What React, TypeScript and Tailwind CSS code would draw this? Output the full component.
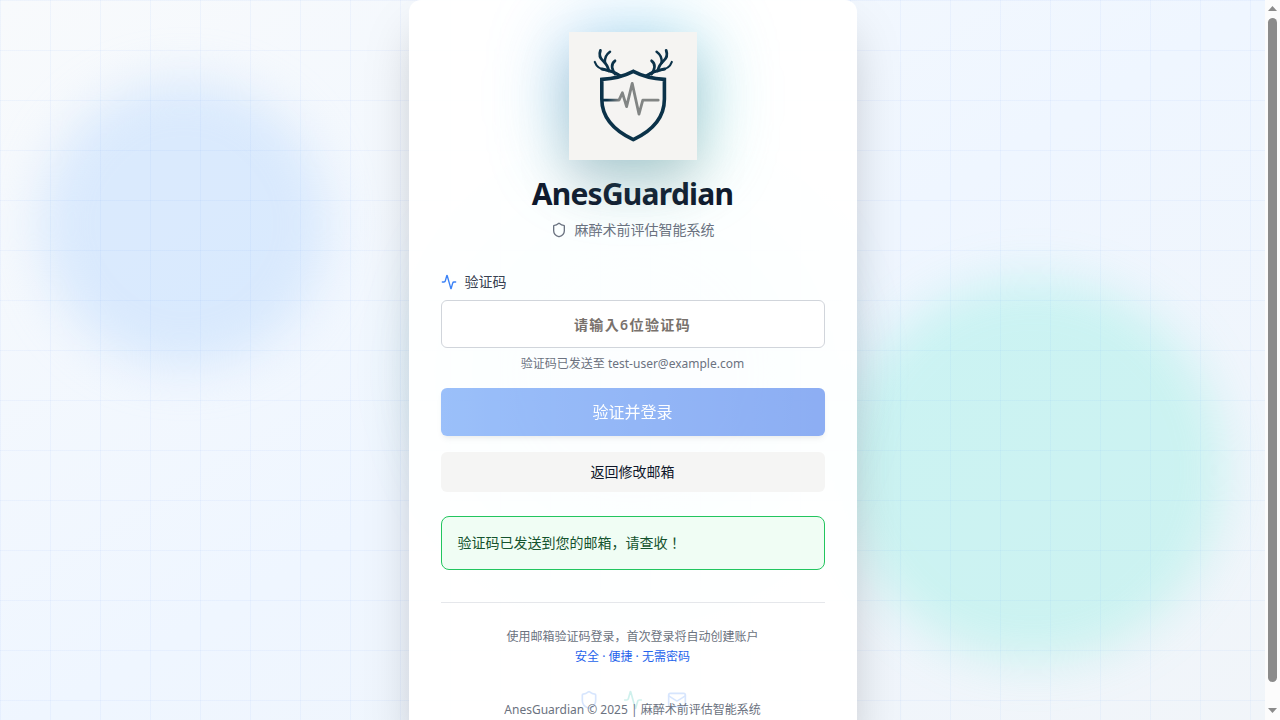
import { Activity, Mail, Shield } from "lucide-react";

function Antler() {
  return (
    <g>
      <path d="M25.8 30C27.4 34.6 31.4 37.4 37 38.2C43 39.2 47 40.6 51.5 44.6" strokeWidth="2.2" />
      <path d="M33 37C40 38.2 45.6 40 51.6 44" strokeWidth="3" />
      <path d="M31.4 18.4C29.8 22.8 31.2 26.4 34.2 29C37.4 31.8 39 34.6 39.8 39" strokeWidth="2.8" />
      <path d="M41 19.8C37 22.6 35.4 26 36 31" strokeWidth="2.5" />
      <path d="M46 28.8C42.4 31.4 42.2 36 46 42" strokeWidth="2.7" />
    </g>
  );
}

function Logo() {
  return (
    <svg
      viewBox="0 0 128 128"
      role="img"
      aria-label="AnesGuardian Logo"
      className="relative size-32 drop-shadow-2xl"
      fill="none"
      strokeLinecap="round"
      strokeLinejoin="round"
    >
      <defs>
        <linearGradient id="pulse" gradientUnits="userSpaceOnUse" x1="38" y1="0" x2="50" y2="0">
          <stop offset="0" stopColor="#0b3249" />
          <stop offset="1" stopColor="#828584" />
        </linearGradient>
      </defs>
      <rect width="128" height="128" fill="#f5f4f2" />
      <g stroke="#0b3249">
        <Antler />
        <g transform="matrix(-1 0 0 1 128.6 0)">
          <Antler />
        </g>
        <path
          d="M64.3 39.4C55.5 44 44.5 46.8 32.8 47.4V67C32.8 86 45 98.6 64.3 107.6C83.6 98.6 95.4 86 95.4 67V47.4C84 46.8 73 44 64.3 39.4Z"
          strokeWidth="3.6"
          strokeLinejoin="miter"
        />
      </g>
      <path
        d="M34 68.2H50L53.4 60.8L57.6 74.6L63.2 51.4L70 82.2L73.8 68.2H89.2"
        stroke="url(#pulse)"
        strokeWidth="2.8"
      />
    </svg>
  );
}

function Backdrop() {
  return (
    <div className="pointer-events-none absolute inset-0 overflow-hidden">
      <div className="absolute top-20 left-10 size-72 rounded-full bg-[#bfdbfe]/50 blur-xl" />
      <div className="absolute right-10 bottom-20 size-96 rounded-full bg-[#5eead4]/25 blur-xl" />
      <div className="absolute top-1/2 left-1/2 size-96 -translate-1/2 rounded-full bg-[#22d3ee]/25 blur-2xl" />
      <div className="absolute inset-0 bg-[linear-gradient(rgba(59,130,246,0.05)_1px,transparent_1px),linear-gradient(90deg,rgba(59,130,246,0.05)_1px,transparent_1px)] bg-[size:50px_50px]" />
    </div>
  );
}

function ScrollRail() {
  return (
    <div
      aria-hidden="true"
      className="sticky top-0 flex h-screen w-[15px] shrink-0 flex-col items-center gap-[7px] bg-[#fcfcfc] pt-[6px] pb-[7px]"
    >
      <svg viewBox="0 0 9 5" className="h-[5px] w-[9px] shrink-0" fill="#8b8b8b">
        <path d="M4.5 0L9 5H0Z" />
      </svg>
      <div className="w-[9px] flex-1 rounded-full bg-[#8b8b8b]" />
      <svg viewBox="0 0 9 5" className="mt-[19px] h-[5px] w-[9px] shrink-0" fill="#8b8b8b">
        <path d="M0 0H9L4.5 5Z" />
      </svg>
    </div>
  );
}

export default function App() {
  return (
    <div className="flex items-start font-['Noto_Sans','Noto_Sans_CJK_JP',sans-serif]">
      <main className="relative flex min-h-screen flex-1 items-center justify-center bg-[linear-gradient(to_bottom_right,#f8fafc,#eff6ff_50%,#f1f5f9)]">
        <Backdrop />

        <section className="relative w-full max-w-md rounded-xl bg-white/95 p-8 shadow-2xl">
          <header className="mb-8 flex flex-col items-center text-center">
            <div className="relative mb-4">
              <div className="absolute inset-0 rounded-3xl bg-linear-to-br from-[#60a5fa] to-[#5eead4] opacity-60 blur-2xl" />
              <Logo />
            </div>
            <h1 className="text-3xl font-bold tracking-tight text-[#0f172a]">AnesGuardian</h1>
            <p className="mt-2 flex items-center gap-2 text-sm text-[#6b7280]">
              <Shield className="size-4" />
              麻醉术前评估智能系统
            </p>
          </header>

          <form className="flex flex-col gap-4" onSubmit={(event) => event.preventDefault()}>
            <div className="flex flex-col gap-2">
              <label htmlFor="code" className="flex items-center gap-2 text-sm text-[#374151]">
                <Activity className="size-4 text-[#3b82f6]" />
                验证码
              </label>
              <input
                id="code"
                type="text"
                inputMode="numeric"
                maxLength={6}
                placeholder="请输入6位验证码"
                className="h-12 w-full rounded-md border border-[#d1d5db] bg-white px-3 text-center text-sm font-semibold tracking-widest text-[#0f172a] placeholder:text-[#78716c]"
              />
              <p className="text-center text-xs text-[#6b7280]">验证码已发送至 test-user@example.com</p>
            </div>
            <button
              type="submit"
              disabled
              className="h-12 rounded-md bg-linear-to-r from-[#3b82f6] to-[#1f5fe8] text-base text-white opacity-50 shadow-md"
            >
              验证并登录
            </button>
            <button type="button" className="h-10 rounded-md bg-[#f5f5f4] text-sm text-[#0f172a]">
              返回修改邮箱
            </button>
          </form>

          <div
            role="alert"
            className="mt-6 rounded-lg border border-[#22c55e] bg-[#f0fdf4] p-4 text-sm text-[#14532d]"
          >
            验证码已发送到您的邮箱，请查收！
          </div>

          <footer className="mt-8 border-t border-[#e5e7eb] pt-6 text-center text-xs">
            <p className="leading-relaxed text-[#6b7280]">使用邮箱验证码登录，首次登录将自动创建账户</p>
            <p className="leading-relaxed text-[#2563eb]">安全 · 便捷 · 无需密码</p>
            <div className="mt-6 flex justify-center gap-6 opacity-20">
              <Shield className="size-5 text-[#3b82f6]" />
              <Activity className="size-5 text-[#14b8a6]" />
              <Mail className="size-5 text-[#3b82f6]" />
            </div>
          </footer>
        </section>

        <p className="absolute inset-x-0 bottom-6 text-center text-xs text-[#6b7280]">
          AnesGuardian © 2025 | 麻醉术前评估智能系统
        </p>
      </main>
      <ScrollRail />
    </div>
  );
}
